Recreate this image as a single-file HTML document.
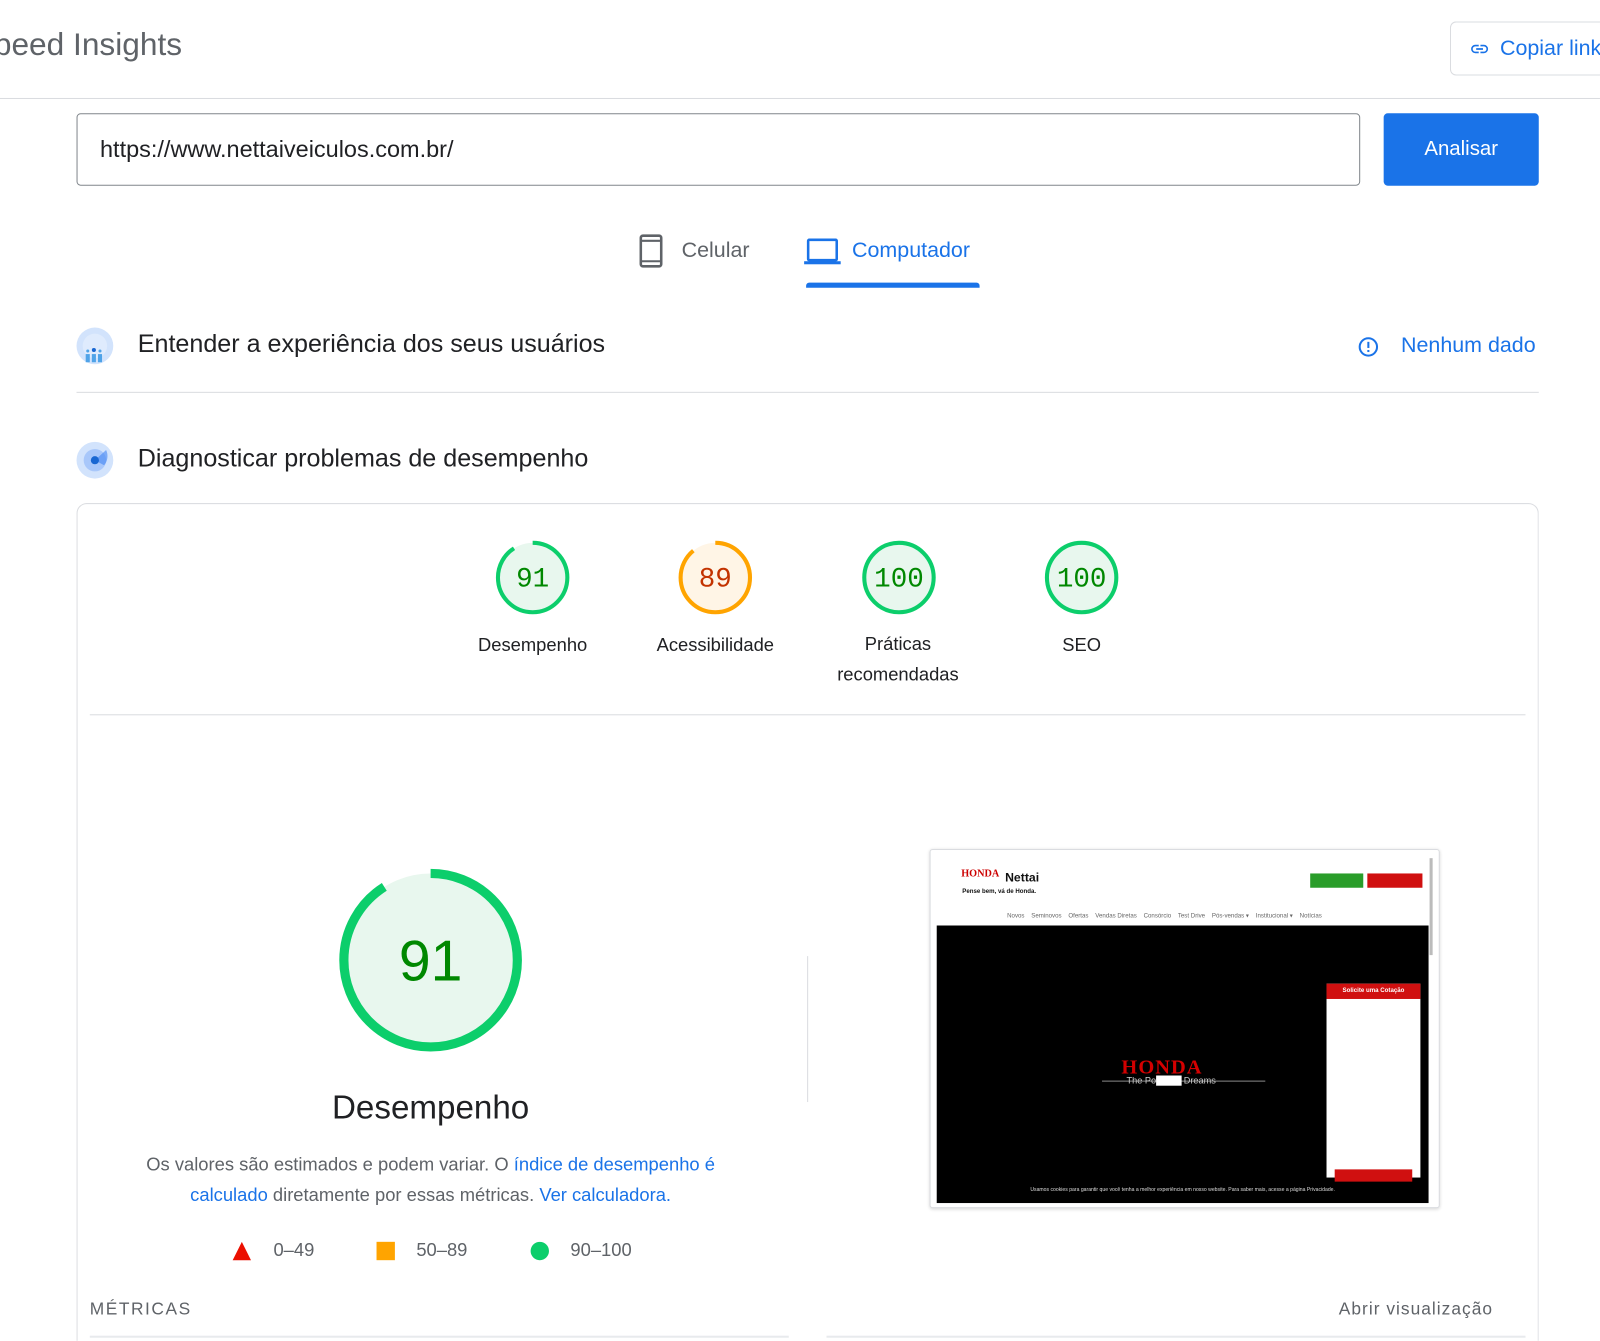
<!DOCTYPE html>
<html style="overflow:hidden;height:1341px"><head><meta charset="utf-8">
<style>
*{box-sizing:border-box;margin:0;padding:0}
body{width:1600px;height:1341px;overflow:hidden;background:#fff;font-family:"Liberation Sans",Arial,sans-serif;color:#202124;position:relative}
#w{position:absolute;left:0;top:0;width:1568px;height:1314px;overflow:hidden;transform:scale(1.0204);transform-origin:0 0}
.a{position:absolute;white-space:nowrap}
.blue{color:#1a73e8}
</style></head><body><div id="w">
<div class="a" style="left:-6px;top:26px;font-size:31px;color:#5f6368">peed Insights</div>
<div class="a" style="left:1421px;top:21px;width:147px;height:53px;border:1px solid #dadce0;border-right:none;border-radius:6px 0 0 6px"></div>
<svg class="a" style="left:1439px;top:38px" width="22" height="20" viewBox="0 0 24 24"><path d="M3.9 12a3.1 3.1 0 0 1 3.1-3.1h4V7H7a5 5 0 0 0 0 10h4v-1.9H7A3.1 3.1 0 0 1 3.9 12zM8 13h8v-2H8zm9-6h-4v1.9h4a3.1 3.1 0 0 1 0 6.2h-4V17h4a5 5 0 0 0 0-10z" fill="#1a73e8"/></svg>
<div class="a blue" style="left:1470px;top:36px;font-size:21px">Copiar link</div>
<div class="a" style="left:0;top:96px;width:1568px;height:1px;background:#dadce0"></div>

<div class="a" style="left:75px;top:111px;width:1258px;height:71px;border:1px solid #80868b;border-radius:4px"></div>
<div class="a" style="left:98px;top:133px;font-size:23px;color:#202124">https://www.nettaiveiculos.com.br/</div>
<div class="a" style="left:1356px;top:111px;width:152px;height:71px;background:#1a73e8;border-radius:4px;color:#fff;font-size:20px;text-align:center;line-height:71px">Analisar</div>

<svg class="a" style="left:626px;top:229px" width="24" height="34" viewBox="0 0 24 34"><rect x="2" y="2" width="20" height="30" rx="2" fill="none" stroke="#5f6368" stroke-width="2.5"/><line x1="2" y1="7" x2="22" y2="7" stroke="#5f6368" stroke-width="2"/><line x1="2" y1="27" x2="22" y2="27" stroke="#5f6368" stroke-width="2"/></svg>
<div class="a" style="left:668px;top:234px;font-size:21px;color:#5f6368">Celular</div>
<svg class="a" style="left:788px;top:233px" width="36" height="28" viewBox="0 0 36 28"><rect x="4" y="2" width="28" height="20" rx="1" fill="none" stroke="#1a73e8" stroke-width="2.5"/><rect x="0" y="23" width="36" height="3" fill="#1a73e8"/></svg>
<div class="a blue" style="left:835px;top:234px;font-size:21px">Computador</div>
<div class="a" style="left:790px;top:277px;width:170px;height:5px;background:#1a73e8;border-radius:3px 3px 0 0"></div>

<svg class="a" style="left:74px;top:320px" width="38" height="38" viewBox="0 0 38 38"><circle cx="19" cy="19" r="18" fill="#d2e3fc"/><circle cx="19" cy="19" r="12" fill="#e8f0fe" opacity=".6"/><circle cx="18" cy="23" r="2" fill="#1967d2"/><rect x="16" y="27" width="4" height="8" fill="#4fa3e8"/><rect x="10" y="27" width="4" height="8" fill="#4fa3e8"/><rect x="22" y="27" width="4" height="8" fill="#4fa3e8"/><circle cx="12" cy="24" r="1.5" fill="#4fa3e8"/><circle cx="24" cy="24" r="1.5" fill="#4fa3e8"/></svg>
<div class="a" style="left:135px;top:324px;font-size:24.6px">Entender a experiência dos seus usuários</div>
<svg class="a" style="left:1330px;top:329px" width="22" height="22" viewBox="0 0 22 22"><circle cx="11" cy="11" r="8.5" fill="none" stroke="#1a73e8" stroke-width="2"/><rect x="10" y="6" width="2" height="6" fill="#1a73e8"/><rect x="10" y="14" width="2" height="2" fill="#1a73e8"/></svg>
<div class="a blue" style="left:1373px;top:327px;font-size:21px">Nenhum dado</div>
<div class="a" style="left:75px;top:384px;width:1433px;height:1px;background:#dadce0"></div>

<svg class="a" style="left:74px;top:432px" width="38" height="38" viewBox="0 0 38 38"><circle cx="19" cy="19" r="18" fill="#d2e3fc"/><circle cx="19" cy="19" r="11" fill="#a8c7fa"/><path d="M19 19 L30 9 A14 14 0 0 1 28 24 Z" fill="#4285f4" opacity=".6"/><circle cx="19" cy="19" r="4" fill="#1967d2"/></svg>
<div class="a" style="left:135px;top:436px;font-size:24.6px">Diagnosticar problemas de desempenho</div>

<div class="a" style="left:75px;top:493px;width:1433px;height:822px;border:1px solid #dadce0;border-bottom:none;border-radius:10px 10px 0 0"></div>

<svg class="a" style="left:485px;top:528px" width="760" height="76">
 <g transform="translate(37,38)"><circle r="34" fill="#e8f7ee"/><circle r="34" fill="none" stroke="#0cce6b" stroke-width="4" stroke-dasharray="194 300" transform="rotate(-90)"/><text y="9" text-anchor="middle" font-family="Liberation Mono,monospace" font-size="27" fill="#008800">91</text></g>
 <g transform="translate(216,38)"><circle r="34" fill="#fff5e6"/><circle r="34" fill="none" stroke="#ffa400" stroke-width="4" stroke-dasharray="190 300" transform="rotate(-90)"/><text y="9" text-anchor="middle" font-family="Liberation Mono,monospace" font-size="27" fill="#c33300">89</text></g>
 <g transform="translate(396,38)"><circle r="34" fill="#e8f7ee"/><circle r="34" fill="none" stroke="#0cce6b" stroke-width="4"/><text y="9" text-anchor="middle" font-family="Liberation Mono,monospace" font-size="27" fill="#008800">100</text></g>
 <g transform="translate(575,38)"><circle r="34" fill="#e8f7ee"/><circle r="34" fill="none" stroke="#0cce6b" stroke-width="4"/><text y="9" text-anchor="middle" font-family="Liberation Mono,monospace" font-size="27" fill="#008800">100</text></g>
</svg>
<div class="a" style="left:442px;top:622px;width:160px;text-align:center;font-size:18px">Desempenho</div>
<div class="a" style="left:621px;top:622px;width:160px;text-align:center;font-size:18px">Acessibilidade</div>
<div class="a" style="left:800px;top:616px;width:160px;text-align:center;font-size:18px;line-height:30px;white-space:normal">Práticas recomendadas</div>
<div class="a" style="left:980px;top:622px;width:160px;text-align:center;font-size:18px">SEO</div>
<div class="a" style="left:88px;top:700px;width:1407px;height:1px;background:#dadce0"></div>

<svg class="a" style="left:327px;top:846px" width="190" height="190"><g transform="translate(95,95)"><circle r="85" fill="#e8f7ee"/><circle r="85" fill="none" stroke="#0cce6b" stroke-width="9" stroke-dasharray="486 600" transform="rotate(-90)"/><text y="20" text-anchor="middle" font-size="56" fill="#008800" font-family="Liberation Sans,sans-serif">91</text></g></svg>
<div class="a" style="left:222px;top:1067px;width:400px;text-align:center;font-size:32.5px">Desempenho</div>
<div class="a" style="left:117px;top:1126px;width:610px;text-align:center;font-size:18px;line-height:30px;color:#5f6368;white-space:normal">Os valores são estimados e podem variar. O <span class="blue">índice de desempenho é calculado</span> diretamente por essas métricas. <span class="blue">Ver calculadora.</span></div>
<svg class="a" style="left:227px;top:1216px" width="20" height="20"><path d="M10 1 L19 19 L1 19Z" fill="#eb0f00"/></svg>
<div class="a" style="left:268px;top:1215px;font-size:18px;color:#5f6368">0–49</div>
<div class="a" style="left:369px;top:1217px;width:18px;height:18px;background:#ffa400"></div>
<div class="a" style="left:408px;top:1215px;font-size:18px;color:#5f6368">50–89</div>
<div class="a" style="left:520px;top:1217px;width:18px;height:18px;border-radius:50%;background:#0cce6b"></div>
<div class="a" style="left:559px;top:1215px;font-size:18px;color:#5f6368">90–100</div>

<div class="a" style="left:791px;top:937px;width:1px;height:143px;background:#dadce0"></div>

<div class="a" style="left:911px;top:832px;width:500px;height:352px;border:1px solid #dadce0;border-radius:3px;background:#fff;box-shadow:0 1px 3px rgba(0,0,0,.15);overflow:hidden">
 <div class="a" style="left:30px;top:18px;font:bold 10px 'Liberation Serif',serif;color:#c00">HONDA</div>
 <div class="a" style="left:73px;top:20px;font:bold 12px 'Liberation Sans';color:#111">Nettai</div>
 <div class="a" style="left:31px;top:38px;font:bold 6px 'Liberation Sans';color:#111">Pense bem, vá de Honda.</div>
 <div class="a" style="left:372px;top:23px;width:52px;height:14px;background:#2a9d2a"></div>
 <div class="a" style="left:428px;top:23px;width:54px;height:14px;background:#d01010"></div>
 <div class="a" style="left:75px;top:61px;font-size:6px;color:#666">Novos &nbsp;&nbsp; Seminovos &nbsp;&nbsp; Ofertas &nbsp;&nbsp; Vendas Diretas &nbsp;&nbsp; Consórcio &nbsp;&nbsp; Test Drive &nbsp;&nbsp; Pós-vendas ▾ &nbsp;&nbsp; Institucional ▾ &nbsp;&nbsp; Notícias</div>
 <div class="a" style="left:6px;top:74px;width:482px;height:272px;background:#000"></div>
 <div class="a" style="left:489px;top:8px;width:3px;height:95px;background:#bbb"></div>
 <div class="a" style="left:187px;top:202px;font:bold 20px 'Liberation Serif',serif;color:#d40000;letter-spacing:1px">HONDA</div>
 <div class="a" style="left:168px;top:226px;width:160px;height:1px;background:#888"></div>
 <div class="a" style="left:192px;top:221px;font-size:9px;color:#ccc">The Po<span style="color:#fff;background:#fff">wer of</span> Dreams</div>
 <div class="a" style="left:388px;top:131px;width:92px;height:190px;background:#fff"></div>
 <div class="a" style="left:388px;top:131px;width:92px;height:15px;background:#d01010;color:#fff;font:bold 6px 'Liberation Sans';text-align:center;line-height:15px">Solicite uma Cotação</div>
 <div class="a" style="left:396px;top:313px;width:76px;height:12px;background:#d01010"></div>
 <div class="a" style="left:6px;top:330px;width:482px;text-align:center;font-size:5px;color:#ddd">Usamos cookies para garantir que você tenha a melhor experiência em nosso website. Para saber mais, acesse a página Privacidade.</div>
</div>

<div class="a" style="left:88px;top:1273px;font-size:17px;letter-spacing:1.5px;color:#5f6368">MÉTRICAS</div>
<div class="a" style="left:1312px;top:1273px;font-size:17px;letter-spacing:1px;color:#5f6368">Abrir visualização</div>
<div class="a" style="left:88px;top:1309px;width:685px;height:2px;background:#e8eaed"></div>
<div class="a" style="left:810px;top:1309px;width:685px;height:2px;background:#e8eaed"></div>
</div></body></html>
